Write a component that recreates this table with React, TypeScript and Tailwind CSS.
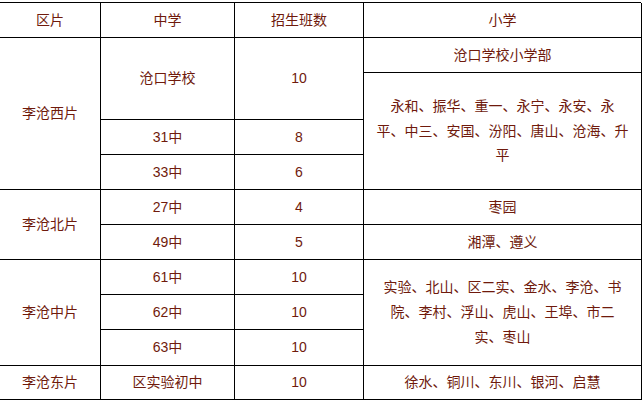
const cell = 'flex items-center justify-center text-center border-r border-b border-black'

const rows = [
  { c: 'col-start-1 row-start-1', t: ['区片'] },
  { c: 'col-start-2 row-start-1', t: ['中学'] },
  { c: 'col-start-3 row-start-1', t: ['招生班数'] },
  { c: 'col-start-4 row-start-1', t: ['小学'] },

  // 李沧西片
  { c: 'col-start-1 row-start-2 row-span-4', t: ['李沧西片'] },
  { c: 'col-start-2 row-start-2 row-span-2', t: ['沧口学校'] },
  { c: 'col-start-3 row-start-2 row-span-2', t: ['10'] },
  { c: 'col-start-4 row-start-2', t: ['沧口学校小学部'] },
  {
    c: 'col-start-4 row-start-3 row-span-3 leading-[24.5px]',
    t: ['永和、振华、重一、永宁、永安、永', '平、中三、安国、汾阳、唐山、沧海、升', '平'],
  },
  { c: 'col-start-2 row-start-4', t: ['31中'] },
  { c: 'col-start-3 row-start-4', t: ['8'] },
  { c: 'col-start-2 row-start-5', t: ['33中'] },
  { c: 'col-start-3 row-start-5', t: ['6'] },

  // 李沧北片
  { c: 'col-start-1 row-start-6 row-span-2', t: ['李沧北片'] },
  { c: 'col-start-2 row-start-6', t: ['27中'] },
  { c: 'col-start-3 row-start-6', t: ['4'] },
  { c: 'col-start-4 row-start-6', t: ['枣园'] },
  { c: 'col-start-2 row-start-7', t: ['49中'] },
  { c: 'col-start-3 row-start-7', t: ['5'] },
  { c: 'col-start-4 row-start-7', t: ['湘潭、遵义'] },

  // 李沧中片
  { c: 'col-start-1 row-start-8 row-span-3', t: ['李沧中片'] },
  { c: 'col-start-2 row-start-8', t: ['61中'] },
  { c: 'col-start-3 row-start-8', t: ['10'] },
  {
    c: 'col-start-4 row-start-8 row-span-3 leading-[25px]',
    t: ['实验、北山、区二实、金水、李沧、书', '院、李村、浮山、虎山、王埠、市二', '实、枣山'],
  },
  { c: 'col-start-2 row-start-9', t: ['62中'] },
  { c: 'col-start-3 row-start-9', t: ['10'] },
  { c: 'col-start-2 row-start-10', t: ['63中'] },
  { c: 'col-start-3 row-start-10', t: ['10'] },

  // 李沧东片
  { c: 'col-start-1 row-start-11', t: ['李沧东片'] },
  { c: 'col-start-2 row-start-11', t: ['区实验初中'] },
  { c: 'col-start-3 row-start-11', t: ['10'] },
  { c: 'col-start-4 row-start-11', t: ['徐水、铜川、东川、银河、启慧'] },
]

export default function App() {
  return (
    <div className="w-[644px] h-[403px] bg-white overflow-hidden">
      <div
        className="mt-[2px] -ml-[1px] w-[642px] grid grid-cols-[101px_134px_129px_278px] grid-rows-[35px_35px_47px_35px_35px_35px_35px_35px_35px_36px_34px] border-t border-l border-black text-[14px] text-[#6f1a0c]"
        style={{ fontFamily: '"Liberation Sans", "Noto Sans CJK SC", sans-serif' }}
      >
        {rows.map((r, i) => (
          <div key={i} className={`${cell} ${r.c}`}>
            <div className="flex flex-col items-center whitespace-nowrap">
              {r.t.map((line, j) => (
                <span key={j}>{line}</span>
              ))}
            </div>
          </div>
        ))}
      </div>
    </div>
  )
}
